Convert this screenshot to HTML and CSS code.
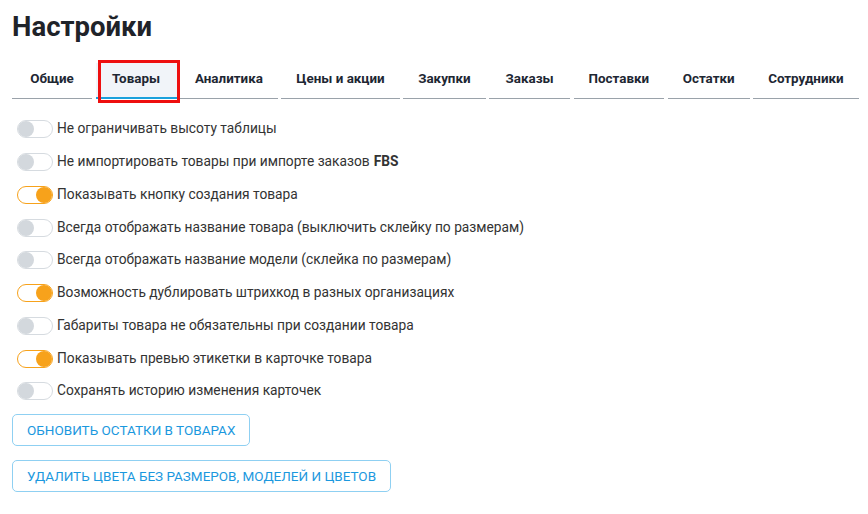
FILE: index.html
```html
<!DOCTYPE html>
<html lang="ru">
<head>
    <meta charset="UTF-8">
    <meta name="viewport" content="width=device-width, initial-scale=1.0">
    <title>Настройки</title>
    <link rel="stylesheet" href="styles.css">
</head>
<body>
    <div class="page">
        <h1>Настройки</h1>
        <div class="tabs">
            <div class="tab">Общие</div>
            <div class="tab active">Товары<span class="mark"></span></div>
            <div class="tab">Аналитика</div>
            <div class="tab">Цены и акции</div>
            <div class="tab">Закупки</div>
            <div class="tab">Заказы</div>
            <div class="tab">Поставки</div>
            <div class="tab">Остатки</div>
            <div class="tab">Сотрудники</div>
        </div>
        <div class="options">
            <label class="option"><span class="switch"></span>Не ограничивать высоту таблицы</label>
            <label class="option"><span class="switch"></span>Не импортировать товары при импорте заказов <b>FBS</b></label>
            <label class="option"><span class="switch on"></span>Показывать кнопку создания товара</label>
            <label class="option"><span class="switch"></span>Всегда отображать название товара (выключить склейку по размерам)</label>
            <label class="option"><span class="switch"></span>Всегда отображать название модели (склейка по размерам)</label>
            <label class="option"><span class="switch on"></span>Возможность дублировать штрихкод в разных организациях</label>
            <label class="option"><span class="switch"></span>Габариты товара не обязательны при создании товара</label>
            <label class="option"><span class="switch on"></span>Показывать превью этикетки в карточке товара</label>
            <label class="option"><span class="switch"></span>Сохранять историю изменения карточек</label>
        </div>
        <div class="actions">
            <button class="btn">Обновить остатки в товарах</button>
            <button class="btn">Удалить цвета без размеров, моделей и цветов</button>
        </div>
    </div>
</body>
</html>
```

FILE: styles.css
```css
body {
    margin: 0;
    font-family: Roboto, "Liberation Sans", sans-serif;
    color: #333;
    background: #fff;
}

.page {
    padding: 12px;
}

h1 {
    margin: 0;
    font-size: 27.5px;
    line-height: 30px;
    font-weight: 700;
    color: #1f2329;
}

.tabs {
    display: flex;
    gap: 3.5px;
    margin-top: 21px;
}

.tab {
    position: relative;
    flex-shrink: 0;
    min-width: 81px;
    box-sizing: border-box;
    padding: 0 15px;
    height: 36px;
    line-height: 31px;
    text-align: center;
    white-space: nowrap;
    font-size: 13.4px;
    font-weight: 700;
    color: #1e2733;
    border-bottom: 1px solid #9aa2aa;
}

.tab:first-child {
    min-width: 80px;
}

.tab.active {
    background: #f1f4f9;
    border-bottom: 2px solid #1aa0dc;
}

.tab .mark {
    position: absolute;
    left: 2px;
    right: -3px;
    top: -3px;
    bottom: -6px;
    border: 3px solid #ee0f0f;
}

.options {
    margin-top: 13px;
}

.option {
    display: flex;
    align-items: center;
    height: 32.75px;
    padding-left: 5px;
    font-size: 13.75px;
    color: #333;
}

.option b {
    margin-left: 4px;
}

.switch {
    position: relative;
    width: 36px;
    height: 18px;
    box-sizing: border-box;
    border: 1px solid #d6dbe0;
    border-radius: 9px;
    background: #fff;
    margin-right: 4px;
    margin-top: 2px;
    flex-shrink: 0;
}

.switch::after {
    content: "";
    position: absolute;
    left: 0;
    top: 0;
    width: 16px;
    height: 16px;
    border-radius: 50%;
    background: #d3d8dd;
}

.switch.on {
    border-color: #f7a21b;
}

.switch.on::after {
    left: auto;
    right: 0;
    background: #f7a21b;
}

.actions {
    display: flex;
    flex-direction: column;
    align-items: flex-start;
    gap: 14px;
    margin-top: 7px;
}

.btn {
    height: 32px;
    padding: 0 14px;
    border: 1px solid #8fd0f2;
    border-radius: 5px;
    background: #fff;
    color: #1b98de;
    font-family: Roboto, "Liberation Sans", sans-serif;
    font-size: 13.5px;
    text-transform: uppercase;
    cursor: pointer;
}
```
